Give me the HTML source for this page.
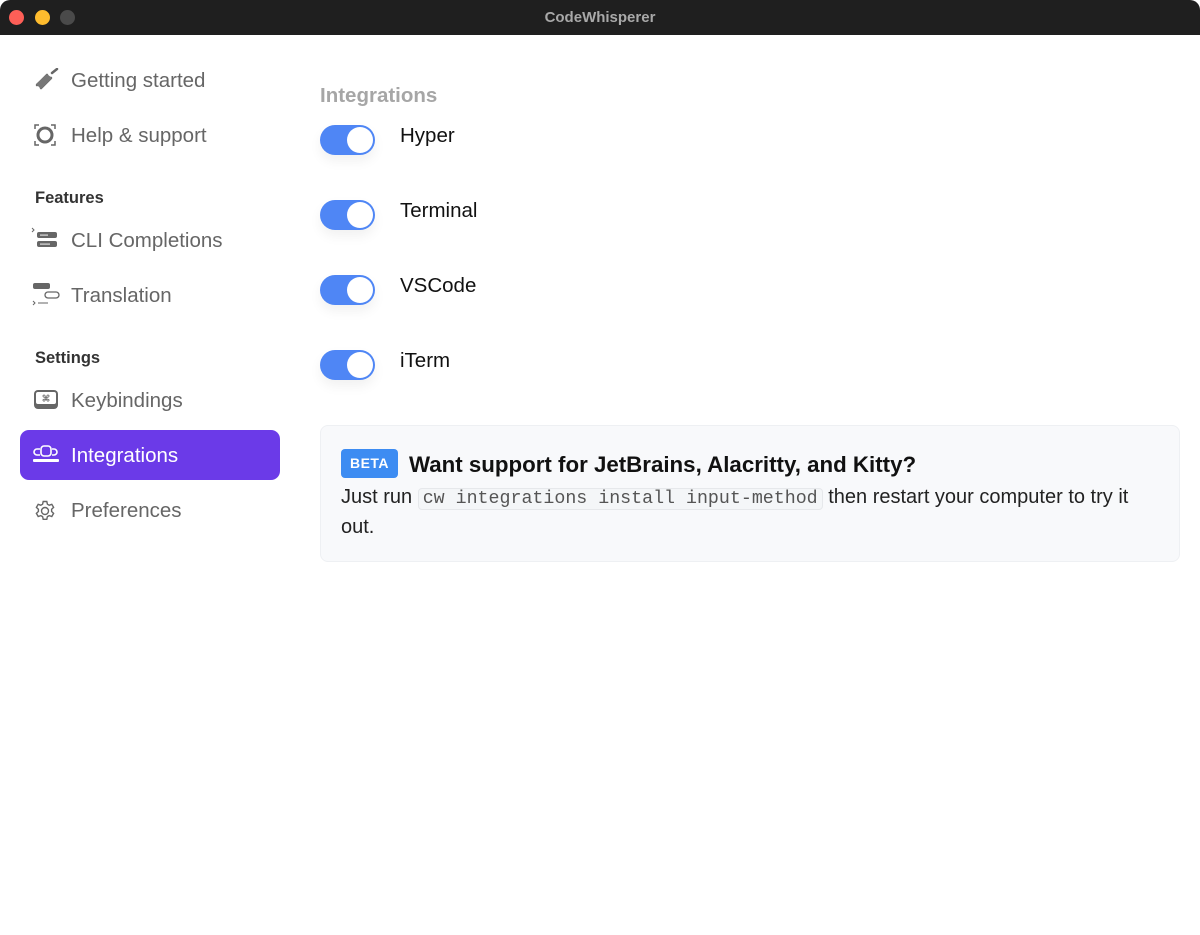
<!DOCTYPE html>
<html><head><meta charset="utf-8"><style>
*{margin:0;padding:0;box-sizing:border-box}
body{width:1200px;height:935px;background:#fff;font-family:"Liberation Sans",sans-serif;position:relative;overflow:hidden}
.tb{position:absolute;left:0;top:0;width:1200px;height:35px;background:#1f1f1f;border-radius:10px 10px 0 0}
.dot{position:absolute;top:10px;width:15px;height:15px;border-radius:50%}
.title{position:absolute;top:0;left:0;width:1200px;line-height:35px;text-align:center;color:#a8a8a8;font-weight:bold;font-size:15px}
.ab{position:absolute;white-space:nowrap}
.nav{font-size:20.5px;color:#666;left:71px;line-height:24px}
.sec{font-size:16.5px;color:#333;left:35px;font-weight:bold;line-height:20px}
.ic{position:absolute;left:33px}
.tg{position:absolute;left:320px;width:55px;height:30px;border-radius:15px;background:#4f86f5;box-shadow:0 6px 12px rgba(0,0,0,.06)}
.tg::after{content:"";position:absolute;right:2px;top:2px;width:26px;height:26px;border-radius:50%;background:#fff}
.lb{left:400px;font-size:20.5px;color:#111;line-height:24px}
</style></head><body>
<div class="tb"></div>
<div class="dot" style="left:9px;background:#fe5f57"></div>
<div class="dot" style="left:35px;background:#febc2e"></div>
<div class="dot" style="left:60px;background:#4a4a4a"></div>
<div class="title">CodeWhisperer</div>

<svg class="ic" style="top:68px" width="26" height="24" viewBox="0 0 26 24"><g stroke="#666" stroke-width="2.5" stroke-linecap="round"><path d="M4 17 L14 7"/><path d="M8 20 L18 10"/><path d="M19 5 L24 1"/></g><path d="M3 16 L14 6 L19 10 L8 21Z" fill="#777"/></svg>
<div class="ab nav" style="top:69px">Getting started</div>
<svg class="ic" style="top:123px" width="24" height="24" viewBox="0 0 24 24"><circle cx="12" cy="12" r="7" fill="none" stroke="#666" stroke-width="3"/><g stroke="#666" stroke-width="1.5" fill="none"><path d="M2 6V2H6M18 2H22V6M22 18V22H18M6 22H2V18"/></g></svg>
<div class="ab nav" style="top:124px">Help &amp; support</div>

<div class="ab sec" style="top:188px">Features</div>
<svg class="ic" style="top:226px;left:30px" width="30" height="26" viewBox="0 0 30 26"><path d="M2 2l2 2-2 2" stroke="#666" fill="none" stroke-width="1"/><rect x="7" y="6" width="20" height="6" rx="2" fill="#666"/><rect x="7" y="15" width="20" height="6" rx="2" fill="#666"/><rect x="10" y="8.5" width="8" height="1.2" fill="#ddd"/><rect x="10" y="17.5" width="10" height="1.2" fill="#ddd"/></svg>
<div class="ab nav" style="top:229px">CLI Completions</div>
<svg class="ic" style="top:282px;left:32px" width="30" height="26" viewBox="0 0 30 26"><rect x="1" y="1" width="17" height="6" rx="2" fill="#666"/><rect x="13" y="10" width="14" height="6" rx="3" fill="none" stroke="#666" stroke-width="1.3"/><path d="M1 19l2 2-2 2M6 21H16" stroke="#666" fill="none" stroke-width="1"/></svg>
<div class="ab nav" style="top:284px">Translation</div>

<div class="ab sec" style="top:348px">Settings</div>
<svg class="ic" style="top:389px" width="26" height="22" viewBox="0 0 26 22"><rect x="1" y="1" width="24" height="19" rx="4" fill="#666"/><rect x="3" y="3" width="20" height="12" rx="2" fill="#fff"/><text x="13" y="12.5" font-size="9" text-anchor="middle" fill="#444" font-family="DejaVu Sans">⌘</text></svg>
<div class="ab nav" style="top:389px">Keybindings</div>

<div class="ab" style="left:20px;top:430px;width:260px;height:50px;border-radius:9px;background:#6b3ae8"></div>
<svg class="ic" style="top:443px;left:32px" width="28" height="24" viewBox="0 0 28 24"><g stroke="#fff" stroke-width="1.6" fill="none"><rect x="9" y="3" width="10" height="10" rx="3"/><path d="M8 6H5a3 3 0 0 0 0 6h3M20 6h2a3 3 0 0 1 0 6h-2"/></g><rect x="1" y="16" width="26" height="3" rx="1" fill="#fff"/></svg>
<div class="ab nav" style="top:444px;color:#fff">Integrations</div>
<svg class="ic" style="top:499px" width="24" height="24" viewBox="0 0 24 24"><g fill="none" stroke="#666" stroke-width="1.4"><circle cx="12" cy="12" r="3.5"/><path d="M10.2 2.5h3.6l.6 2.7 1.8 1 2.6-.9 1.8 3.1-2 1.9v2.2l2 1.9-1.8 3.1-2.6-.9-1.8 1-.6 2.7h-3.6l-.6-2.7-1.8-1-2.6.9-1.8-3.1 2-1.9v-2.2l-2-1.9 1.8-3.1 2.6.9 1.8-1z"/></g></svg>
<div class="ab nav" style="top:499px">Preferences</div>

<div class="ab" style="left:320px;top:85px;font-size:20.5px;font-weight:bold;color:#a6a6a6;line-height:22px">Integrations</div>
<div class="tg" style="top:125px"></div><div class="ab lb" style="top:124px">Hyper</div>
<div class="tg" style="top:200px"></div><div class="ab lb" style="top:199px">Terminal</div>
<div class="tg" style="top:275px"></div><div class="ab lb" style="top:274px">VSCode</div>
<div class="tg" style="top:350px"></div><div class="ab lb" style="top:349px">iTerm</div>

<div class="ab" style="left:320px;top:425px;width:860px;height:137px;background:#f8f9fb;border:1px solid #eef0f3;border-radius:8px"></div>
<div class="ab" style="left:341px;top:449px;width:57px;height:29px;background:#3d8cf2;border-radius:4px;color:#fff;font-weight:bold;font-size:14px;line-height:29px;text-align:center;letter-spacing:.5px">BETA</div>
<div class="ab" style="left:409px;top:451px;font-size:22.3px;font-weight:bold;color:#111;line-height:28px">Want support for JetBrains, Alacritty, and Kitty?</div>
<div class="ab" style="left:341px;top:484px;font-size:20px;color:#222;line-height:26px">Just run <span style="font-family:'Liberation Mono',monospace;font-size:18.3px;color:#555;background:#f4f6f8;border:1px solid #e6e8eb;border-radius:4px;padding:0 4px">cw integrations install input-method</span> then restart your computer to try it</div>
<div class="ab" style="left:341px;top:514px;font-size:20px;color:#222;line-height:26px">out.</div>
</body></html>
